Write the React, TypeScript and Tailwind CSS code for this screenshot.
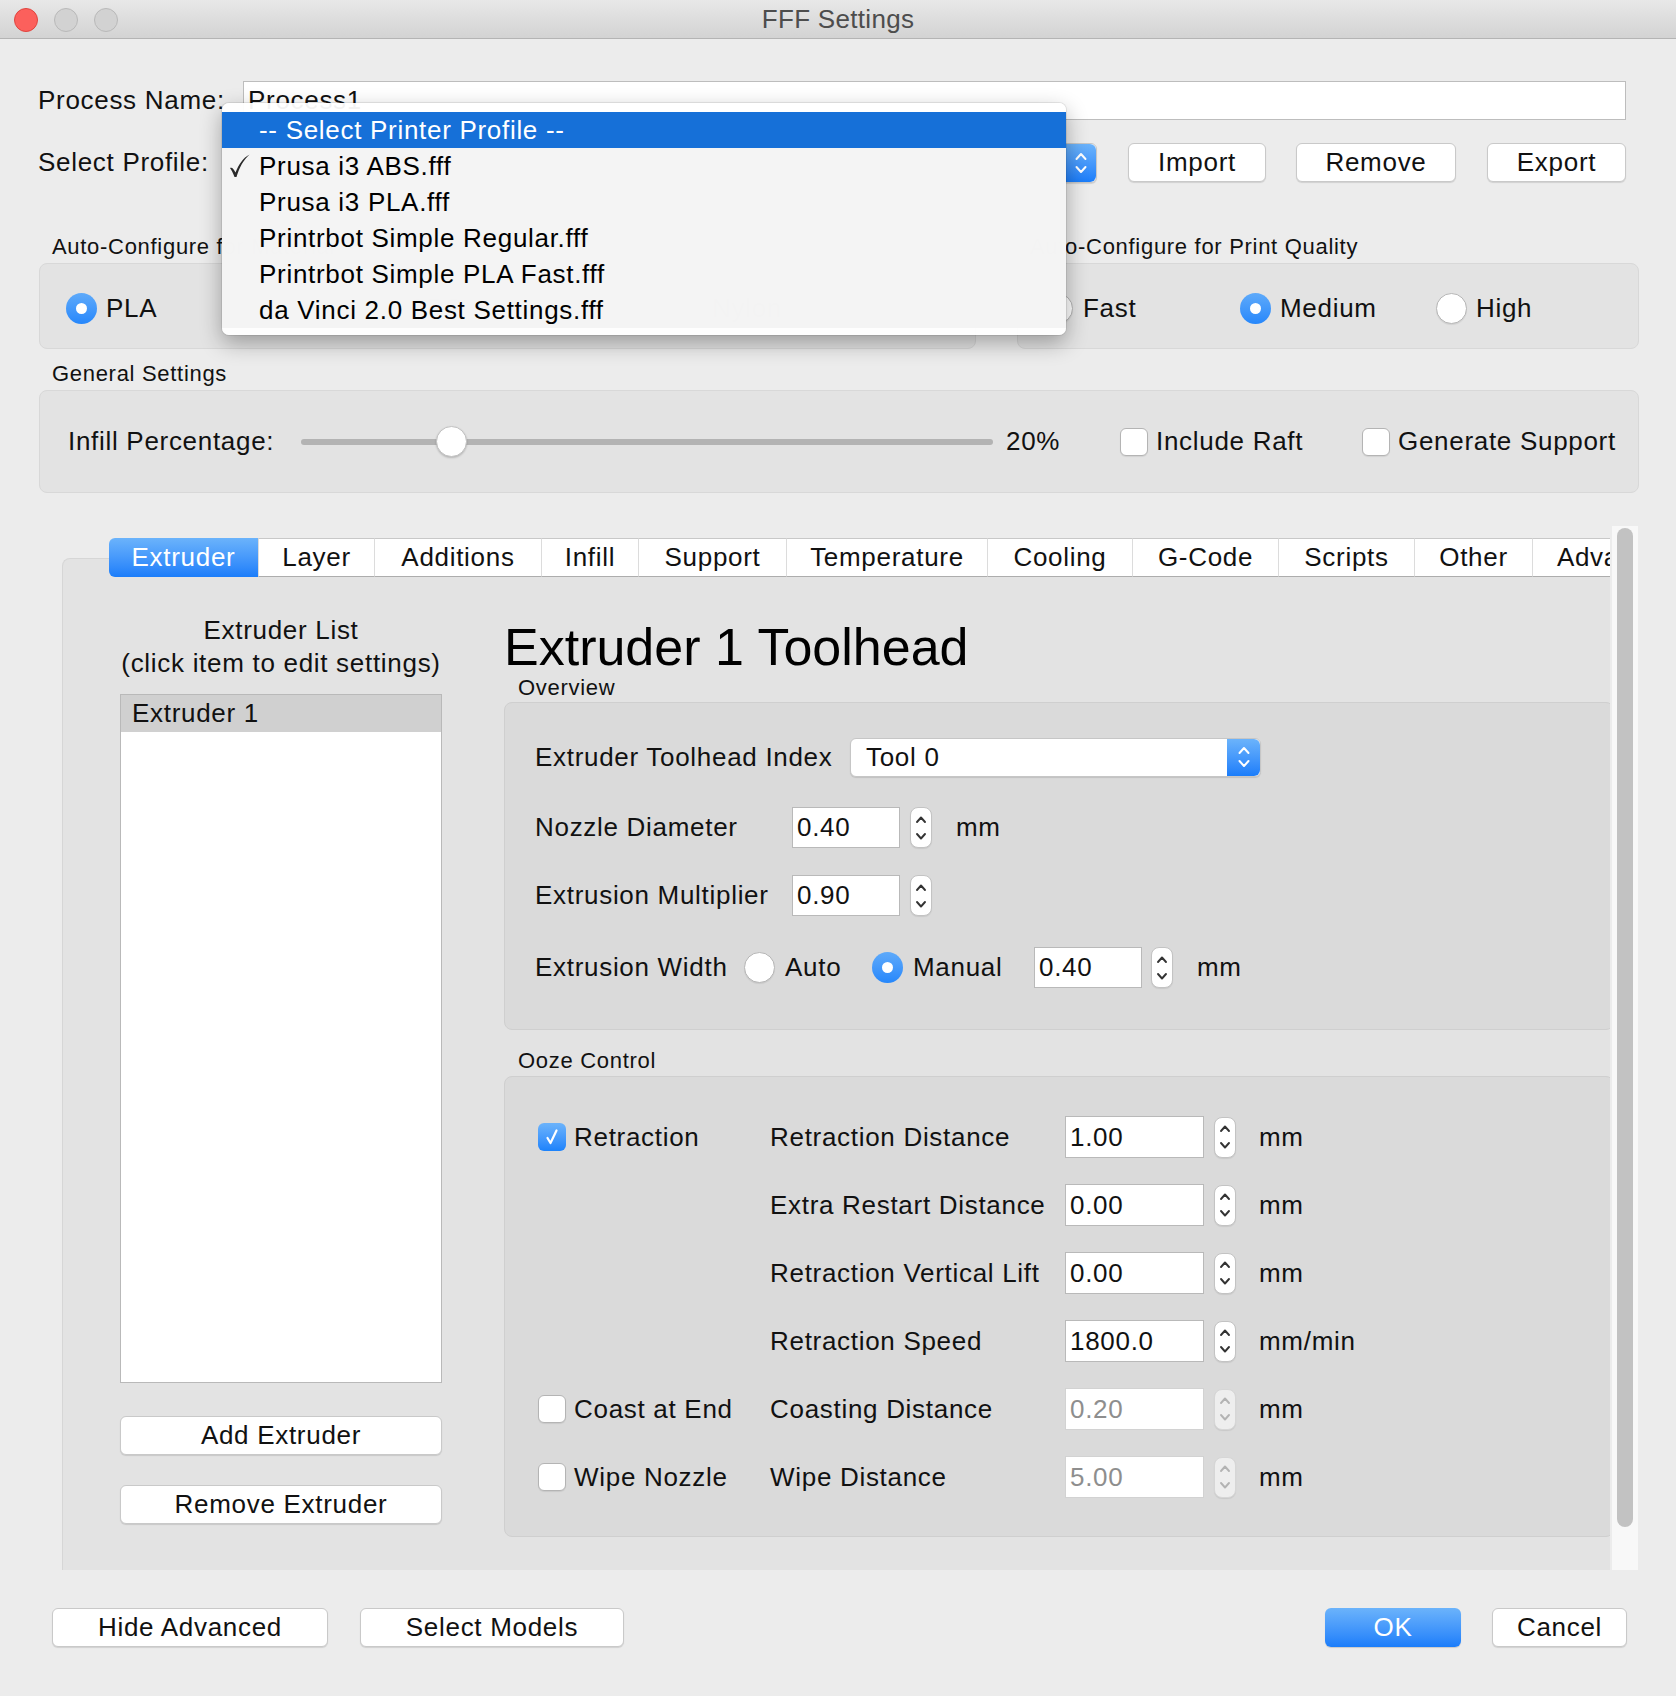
import React from "react";

const FONT = "font-['Liberation_Sans',Arial,Helvetica,sans-serif]";

function Btn({ w, children, primary }: { w: string; children: React.ReactNode; primary?: boolean }) {
  return primary ? (
    <div
      className={`${w} h-[39px] rounded-[6px] bg-linear-to-b from-[#6bb3fb] to-[#1a7dfa] text-white text-[26px] flex items-center justify-center shadow-[0_1px_1px_rgba(0,0,0,0.15)]`}
    >
      {children}
    </div>
  ) : (
    <div
      className={`${w} h-[39px] rounded-[6px] bg-white border border-[#c9c9c9] text-[26px] flex items-center justify-center shadow-[0_1px_1px_rgba(0,0,0,0.12)]`}
    >
      {children}
    </div>
  );
}

function Stepper({ disabled }: { disabled?: boolean }) {
  const c = disabled ? "#b3b3b3" : "#333333";
  return (
    <div
      className={`w-[22px] h-[41px] rounded-[8px] border flex items-center justify-center shadow-[0_1px_1px_rgba(0,0,0,0.08)] ${
        disabled ? "border-[#d6d6d6] bg-[#eeeeee]" : "border-[#c3c3c3] bg-white"
      }`}
    >
      <svg width="14" height="30" viewBox="0 0 14 30">
        <path d="M3 9 L7 4.5 L11 9" fill="none" stroke={c} strokeWidth="1.9" strokeLinecap="round" strokeLinejoin="round" />
        <path d="M3 21 L7 25.5 L11 21" fill="none" stroke={c} strokeWidth="1.9" strokeLinecap="round" strokeLinejoin="round" />
      </svg>
    </div>
  );
}

function Field({ value, w, h, disabled }: { value: string; w: string; h: string; disabled?: boolean }) {
  return (
    <div
      className={`${w} ${h} bg-white border flex items-center pl-[4px] text-[26px] ${
        disabled ? "border-[#d2d2d2] text-[#8e8e8e]" : "border-[#b9b9b9] text-[#111]"
      }`}
    >
      {value}
    </div>
  );
}

function Check({ checked }: { checked?: boolean }) {
  return checked ? (
    <div className="w-[28px] h-[28px] rounded-[6px] bg-linear-to-b from-[#6bb3fb] to-[#1b82fb] flex items-center justify-center shrink-0">
      <svg width="16" height="20" viewBox="0 0 16 20">
        <path d="M3.5 11 L6.5 16 L12.5 3.5" fill="none" stroke="white" strokeWidth="2.2" strokeLinecap="round" strokeLinejoin="round" />
      </svg>
    </div>
  ) : (
    <div className="w-[28px] h-[28px] rounded-[6px] bg-white border border-[#b4b4b4] shadow-[0_1px_1px_rgba(0,0,0,0.08)] shrink-0" />
  );
}

function Radio({ on }: { on?: boolean }) {
  return on ? (
    <div className="w-[31px] h-[31px] rounded-full bg-linear-to-b from-[#5eaafa] to-[#2587fb] flex items-center justify-center shrink-0">
      <div className="w-[11px] h-[11px] rounded-full bg-white" />
    </div>
  ) : (
    <div className="w-[31px] h-[31px] rounded-full bg-white border border-[#b6b6b6] shadow-[0_1px_1px_rgba(0,0,0,0.08)] shrink-0" />
  );
}

function UpDown({ w }: { w: string }) {
  return (
    <div className={`${w} h-full rounded-r-[6px] bg-linear-to-b from-[#6bb3fb] to-[#1a7dfa] flex items-center justify-center`}>
      <svg width="14" height="28" viewBox="0 0 14 28">
        <path d="M2.5 10 L7 5 L11.5 10" fill="none" stroke="white" strokeWidth="2" strokeLinecap="round" strokeLinejoin="round" />
        <path d="M2.5 18 L7 23 L11.5 18" fill="none" stroke="white" strokeWidth="2" strokeLinecap="round" strokeLinejoin="round" />
      </svg>
    </div>
  );
}

const tabs: [string, string][] = [
  ["Extruder", "w-[149px]"],
  ["Layer", "w-[116px]"],
  ["Additions", "w-[167px]"],
  ["Infill", "w-[97px]"],
  ["Support", "w-[148px]"],
  ["Temperature", "w-[201px]"],
  ["Cooling", "w-[145px]"],
  ["G-Code", "w-[146px]"],
  ["Scripts", "w-[136px]"],
  ["Other", "w-[118px]"],
  ["Advanced", "w-[170px]"],
];

const oozeRows: { check?: string; checked?: boolean; label: string; value: string; unit: string; disabled?: boolean }[] = [
  { check: "Retraction", checked: true, label: "Retraction Distance", value: "1.00", unit: "mm" },
  { label: "Extra Restart Distance", value: "0.00", unit: "mm" },
  { label: "Retraction Vertical Lift", value: "0.00", unit: "mm" },
  { label: "Retraction Speed", value: "1800.0", unit: "mm/min" },
  { check: "Coast at End", label: "Coasting Distance", value: "0.20", unit: "mm", disabled: true },
  { check: "Wipe Nozzle", label: "Wipe Distance", value: "5.00", unit: "mm", disabled: true },
];

export default function App() {
  return (
    <div className={`w-[1676px] h-[1696px] bg-[#ececec] relative overflow-hidden text-[#111] tracking-[0.7px] ${FONT}`}>
      {/* Title bar */}
      <div className="h-[39px] bg-linear-to-b from-[#e8e8e8] to-[#d3d3d3] border-b border-[#b4b4b4] grid grid-cols-[1fr_auto_1fr] items-center">
        <div className="flex items-center pl-[14px] gap-[16px]">
          <div className="w-[24px] h-[24px] rounded-full bg-[#fc605c] border border-[#e0443e]" />
          <div className="w-[24px] h-[24px] rounded-full bg-[#d2d2d2] border border-[#b9b9b9]" />
          <div className="w-[24px] h-[24px] rounded-full bg-[#d2d2d2] border border-[#b9b9b9]" />
        </div>
        <div className="text-[26px] text-[#4d4d4d] tracking-[0.3px]">FFF Settings</div>
        <div />
      </div>

      {/* Process name */}
      <div className="mt-[42px] ml-[38px] flex items-center h-[39px]">
        <div className="w-[205px] text-[26px]">Process Name:</div>
        <div className="w-[1383px] h-[39px] bg-white border border-[#bdbdbd] flex items-center pl-[4px] text-[26px]">
          Process1
        </div>
      </div>

      {/* Select profile */}
      <div className="mt-[22px] ml-[38px] flex items-center h-[41px]">
        <div className="w-[184px] text-[26px]">Select Profile:</div>
        <div className="w-[875px] h-[40px] bg-white border border-[#c6c6c6] rounded-[6px] flex items-center justify-end shadow-[0_1px_1px_rgba(0,0,0,0.12)]">
          <UpDown w="w-[31px]" />
        </div>
        <div className="ml-[31px]">
          <Btn w="w-[138px]">Import</Btn>
        </div>
        <div className="ml-[30px]">
          <Btn w="w-[160px]">Remove</Btn>
        </div>
        <div className="ml-[31px]">
          <Btn w="w-[139px]">Export</Btn>
        </div>
      </div>

      {/* Auto configure */}
      <div className="mt-[51px] ml-[39px] flex gap-[41px]">
        <div className="w-[937px]">
          <div className="h-[26px] leading-[26px] text-[22px] pl-[13px]">Auto-Configure for Material</div>
          <div className="mt-[3px] h-[86px] rounded-[8px] bg-[#e3e3e3] border border-[#d8d8d8] flex items-center pl-[26px] pt-[5px]">
            {["PLA", "ABS", "Nylon"].map((m, i) => (
              <div key={m} className="w-[338px] flex items-center gap-[9px]">
                <Radio on={i === 0} />
                <span className="text-[26px]">{m}</span>
              </div>
            ))}
          </div>
        </div>
        <div className="w-[622px]">
          <div className="h-[26px] leading-[26px] text-[22px] pl-[13px]">Auto-Configure for Print Quality</div>
          <div className="mt-[3px] h-[86px] rounded-[8px] bg-[#e3e3e3] border border-[#d8d8d8] flex items-center pl-[24px] pt-[5px]">
            <div className="w-[198px] flex items-center gap-[10px]">
              <Radio />
              <span className="text-[26px]">Fast</span>
            </div>
            <div className="w-[196px] flex items-center gap-[9px]">
              <Radio on />
              <span className="text-[26px]">Medium</span>
            </div>
            <div className="flex items-center gap-[9px]">
              <Radio />
              <span className="text-[26px]">High</span>
            </div>
          </div>
        </div>
      </div>

      {/* General settings */}
      <div className="mt-[12px] ml-[39px] w-[1600px]">
        <div className="h-[26px] leading-[26px] text-[22px] pl-[13px]">General Settings</div>
        <div className="mt-[3px] h-[103px] rounded-[8px] bg-[#e3e3e3] border border-[#d8d8d8] flex items-center pl-[28px]">
          <div className="w-[233px] text-[26px]">Infill Percentage:</div>
          <div className="w-[692px] h-[31px] relative flex items-center">
            <div className="w-full h-[6px] rounded-full bg-[#b3b3b3]" />
            <div className="absolute left-[135px] top-0 w-[31px] h-[31px] rounded-full bg-white border border-[#c2c2c2] shadow-[0_1px_2px_rgba(0,0,0,0.2)]" />
          </div>
          <div className="ml-[13px] w-[114px] text-[26px]">20%</div>
          <div className="w-[242px] flex items-center gap-[8px]">
            <Check />
            <span className="text-[26px]">Include Raft</span>
          </div>
          <div className="flex items-center gap-[8px]">
            <Check />
            <span className="text-[26px]">Generate Support</span>
          </div>
        </div>
      </div>

      {/* Tab section */}
      <div className="mt-[33px] ml-[62px] flex gap-[2px]">
        <div className="w-[1548px] h-[1044px] overflow-hidden">
          <div className="mt-[12px] ml-[47px] h-[39px] relative z-10 flex">
            {tabs.map(([t, w], i) =>
              i === 0 ? (
                <div
                  key={t}
                  className={`${w} shrink-0 h-[39px] rounded-l-[6px] bg-linear-to-b from-[#6bb3fb] to-[#1a7dfa] text-white text-[26px] flex items-center justify-center`}
                >
                  {t}
                </div>
              ) : (
                <div
                  key={t}
                  className={`${w} shrink-0 h-[39px] bg-white border-t border-t-[#c8c8c8] border-b border-b-[#adadad] border-l border-l-[#dcdcdc] text-[26px] flex items-center justify-center`}
                >
                  {t}
                </div>
              )
            )}
          </div>
          <div className="-mt-[19px] h-[1012px] w-[1600px] bg-[#e3e3e3] rounded-tl-[8px] border-l border-t border-[#d6d6d6] flex items-start pl-[57px] pt-[55px]">
            {/* Left column */}
            <div className="w-[322px] shrink-0 flex flex-col">
              <div className="text-[26px] leading-[33px] text-center">Extruder List</div>
              <div className="text-[26px] leading-[33px] text-center whitespace-nowrap">(click item to edit settings)</div>
              <div className="mt-[14px] h-[689px] bg-white border border-[#b9b9b9]">
                <div className="h-[37px] bg-[#d0d0d0] flex items-center pl-[11px] text-[26px]">Extruder 1</div>
              </div>
              <div className="mt-[33px]">
                <Btn w="w-[322px]">Add Extruder</Btn>
              </div>
              <div className="mt-[30px]">
                <Btn w="w-[322px]">Remove Extruder</Btn>
              </div>
            </div>

            {/* Right column */}
            <div className="ml-[62px] mt-[5px] w-[1110px] shrink-0">
              <div className="h-[56px] leading-[56px] text-[52px] text-black whitespace-nowrap tracking-normal">
                Extruder 1 Toolhead
              </div>
              <div className="h-[25px] leading-[25px] text-[22px] pl-[14px]">Overview</div>
              <div className="mt-[2px] h-[328px] rounded-[8px] bg-[#dadada] border border-[#cfcfcf] pt-[34px] pl-[30px]">
                <div className="h-[40px] flex items-center">
                  <div className="w-[315px] text-[26px] whitespace-nowrap">Extruder Toolhead Index</div>
                  <div className="w-[411px] h-[39px] bg-white border border-[#c6c6c6] rounded-[6px] flex items-center justify-between shadow-[0_1px_1px_rgba(0,0,0,0.12)]">
                    <span className="pl-[15px] text-[26px]">Tool 0</span>
                    <UpDown w="w-[33px]" />
                  </div>
                </div>
                <div className="mt-[30px] h-[41px] flex items-center">
                  <div className="w-[257px] text-[26px]">Nozzle Diameter</div>
                  <Field value="0.40" w="w-[108px]" h="h-[41px]" />
                  <div className="ml-[10px]">
                    <Stepper />
                  </div>
                  <div className="ml-[24px] text-[26px]">mm</div>
                </div>
                <div className="mt-[27px] h-[41px] flex items-center">
                  <div className="w-[257px] text-[26px] whitespace-nowrap">Extrusion Multiplier</div>
                  <Field value="0.90" w="w-[108px]" h="h-[41px]" />
                  <div className="ml-[10px]">
                    <Stepper />
                  </div>
                </div>
                <div className="mt-[31px] h-[41px] flex items-center">
                  <div className="w-[209px] text-[26px] whitespace-nowrap">Extrusion Width</div>
                  <div className="w-[128px] flex items-center gap-[10px]">
                    <Radio />
                    <span className="text-[26px]">Auto</span>
                  </div>
                  <div className="w-[162px] flex items-center gap-[10px]">
                    <Radio on />
                    <span className="text-[26px]">Manual</span>
                  </div>
                  <Field value="0.40" w="w-[108px]" h="h-[41px]" />
                  <div className="ml-[9px]">
                    <Stepper />
                  </div>
                  <div className="ml-[24px] text-[26px]">mm</div>
                </div>
              </div>

              <div className="mt-[18px] h-[25px] leading-[25px] text-[22px] pl-[14px]">Ooze Control</div>
              <div className="mt-[3px] h-[461px] rounded-[8px] bg-[#dadada] border border-[#cfcfcf] pt-[39px] pl-[33px]">
                {oozeRows.map((r, i) => (
                  <div key={r.label} className={`h-[42px] flex items-center ${i > 0 ? "mt-[26px]" : ""}`}>
                    <div className="w-[232px] flex items-center">
                      {r.check ? (
                        <>
                          <Check checked={r.checked} />
                          <span className="ml-[8px] text-[26px] whitespace-nowrap">{r.check}</span>
                        </>
                      ) : null}
                    </div>
                    <div className="w-[295px] text-[26px] whitespace-nowrap">{r.label}</div>
                    <Field value={r.value} w="w-[139px]" h="h-[42px]" disabled={r.disabled} />
                    <div className="ml-[10px]">
                      <Stepper disabled={r.disabled} />
                    </div>
                    <div className="ml-[23px] text-[26px]">{r.unit}</div>
                  </div>
                ))}
              </div>
            </div>
          </div>
        </div>
        {/* Scrollbar */}
        <div className="w-[26px] h-[1044px] bg-[#f8f8f8] flex justify-center pt-[2px]">
          <div className="w-[16px] h-[999px] rounded-full bg-[#c2c2c2]" />
        </div>
      </div>

      {/* Bottom buttons */}
      <div className="mt-[38px] ml-[52px] flex items-center">
        <Btn w="w-[276px]">Hide Advanced</Btn>
        <div className="ml-[32px]">
          <Btn w="w-[264px]">Select Models</Btn>
        </div>
        <div className="ml-[701px]">
          <Btn w="w-[136px]" primary>
            OK
          </Btn>
        </div>
        <div className="ml-[31px]">
          <Btn w="w-[135px]">Cancel</Btn>
        </div>
      </div>

      {/* Open dropdown menu */}
      <div className="absolute left-[222px] top-[103px] w-[844px] h-[232px] rounded-[7px] overflow-hidden bg-[rgba(255,255,255,0.95)] shadow-[0_8px_22px_rgba(0,0,0,0.32),0_0_0_1px_rgba(0,0,0,0.08)] flex flex-col">
        <div className="h-[9px]" />
        <div className="h-[36px] bg-[#1670d8] text-white text-[26px] flex items-center pl-[37px]">
          -- Select Printer Profile --
        </div>
        <div className="bg-[rgba(243,243,243,0.9)]">
          {[
            "Prusa i3 ABS.fff",
            "Prusa i3 PLA.fff",
            "Printrbot Simple Regular.fff",
            "Printrbot Simple PLA Fast.fff",
            "da Vinci 2.0 Best Settings.fff",
          ].map((p, i) => (
            <div key={p} className="h-[36px] flex items-center text-[26px] text-black">
              <div className="w-[37px] pl-[6px] flex items-center">
                {i === 0 ? (
                  <svg width="24" height="26" viewBox="0 0 24 26">
                    <path
                      d="M2 15 C4 14 5.5 15.5 7.5 19.5 C11 11 15 5 21.5 1.5 C15.5 7 11.5 14 8.5 24 L6.5 24 C5 20 3.5 17 2 15 Z"
                      fill="#2a2a2a"
                    />
                  </svg>
                ) : null}
              </div>
              {p}
            </div>
          ))}
        </div>
        <div className="flex-1" />
      </div>
    </div>
  );
}
